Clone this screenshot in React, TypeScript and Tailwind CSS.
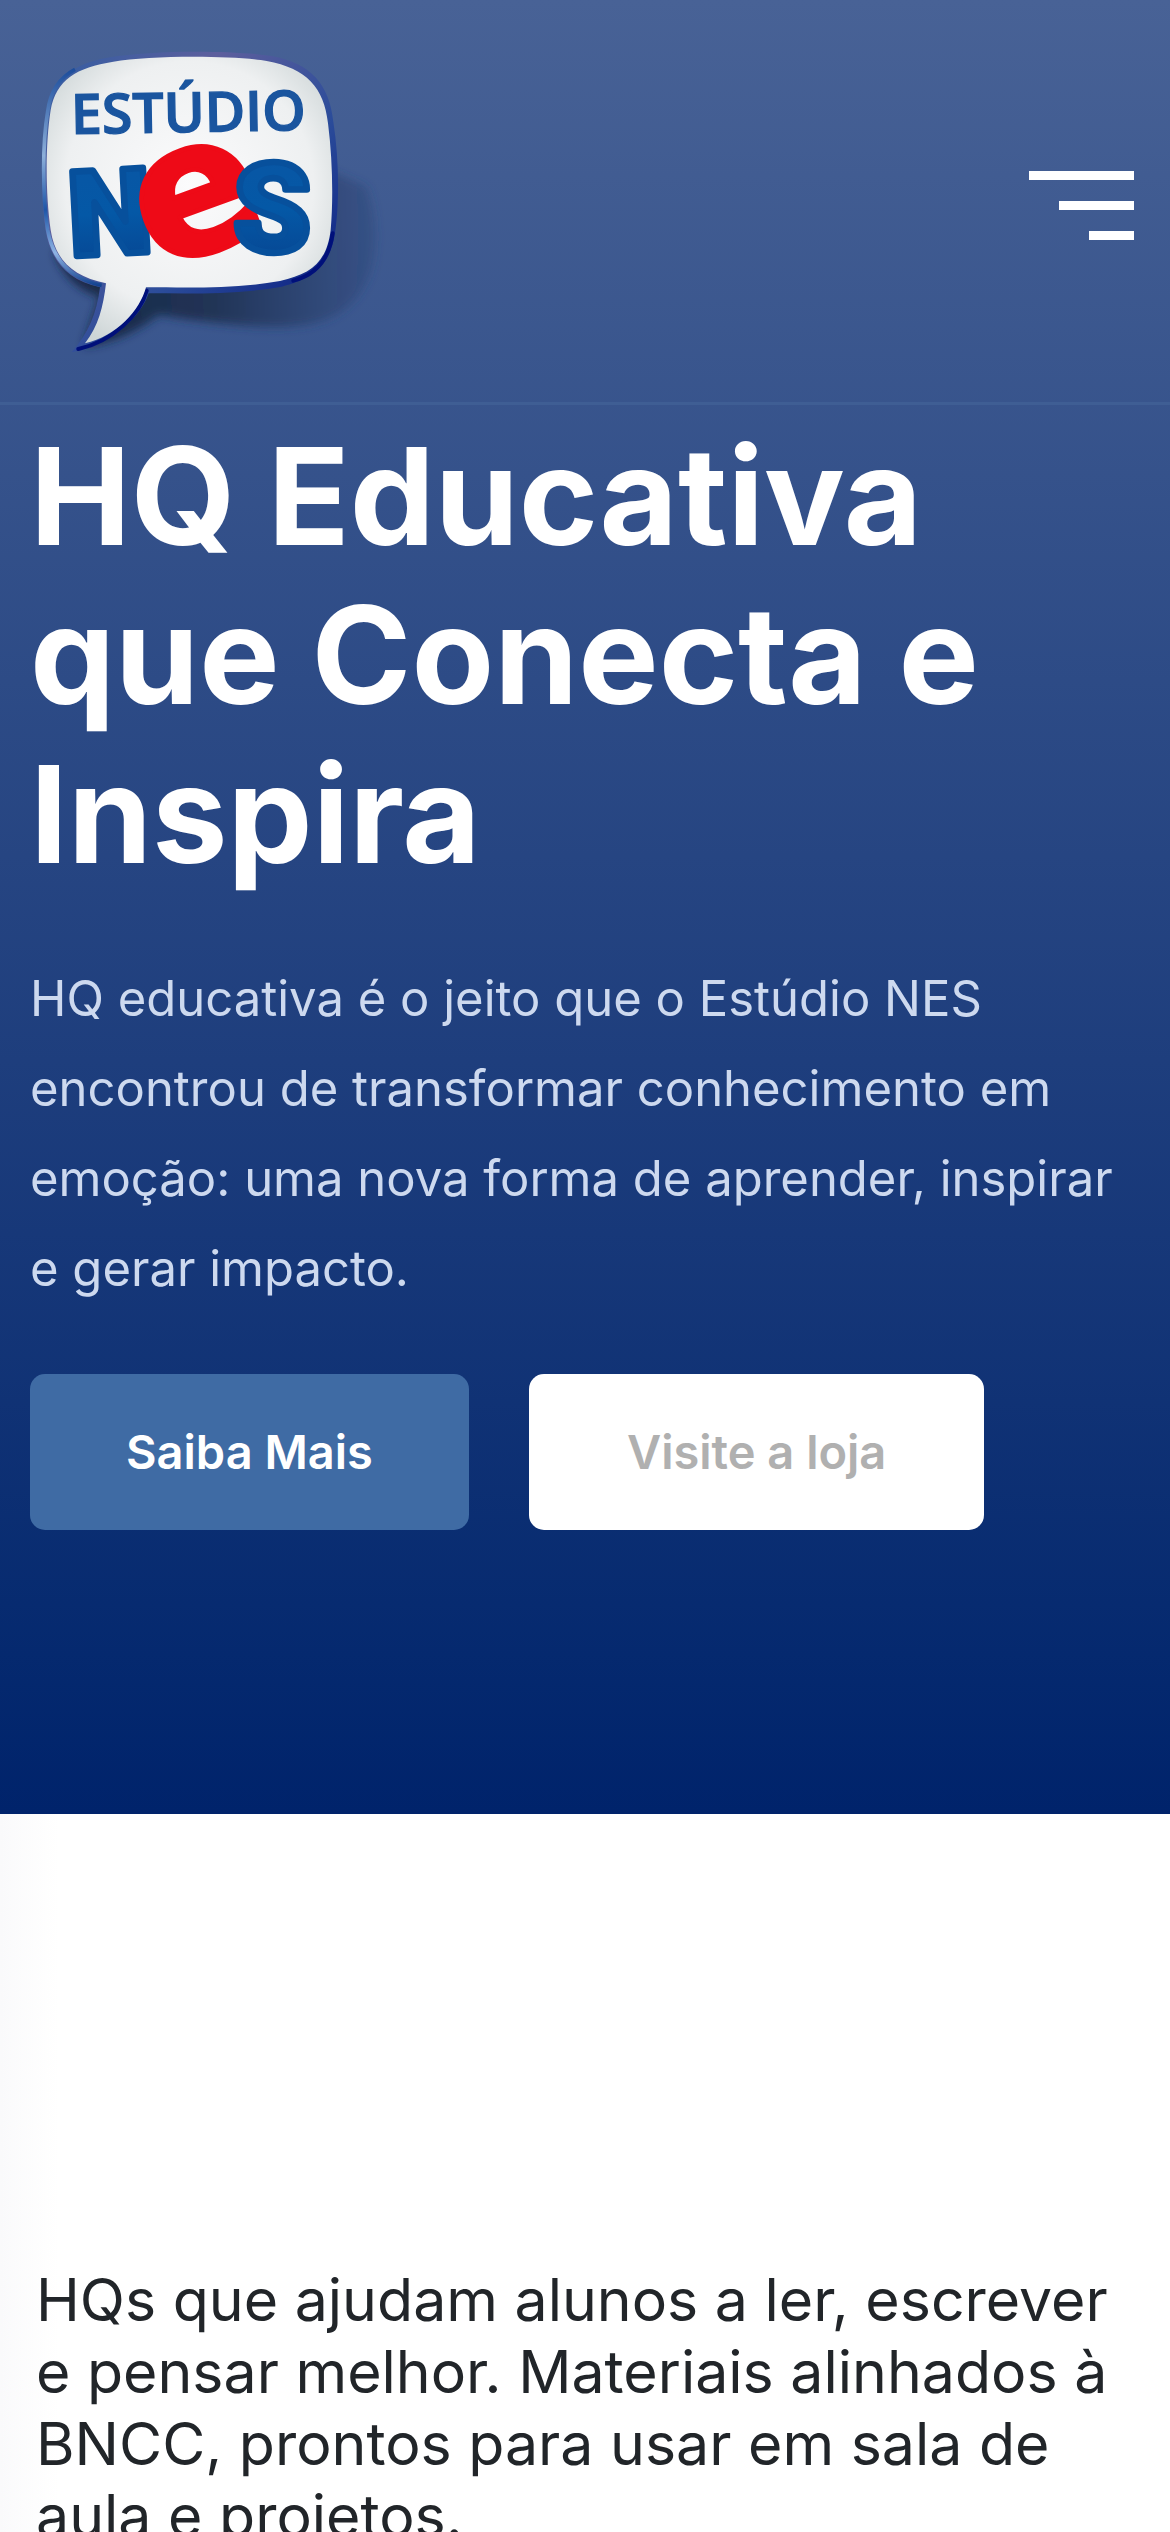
function Logo() {
  return (
    <svg
      viewBox="90 144 1080 945"
      className="h-[315px] w-[360px] overflow-visible"
      role="img"
      aria-label="Estúdio NES"
    >
      <defs>
        <linearGradient id="rim" x1="0" y1="0" x2="1" y2="1">
          <stop offset="0" stopColor="#2f5da3" />
          <stop offset="0.3" stopColor="#5d5f9d" />
          <stop offset="0.6" stopColor="#2b4c9a" />
          <stop offset="1" stopColor="#00107a" />
        </linearGradient>
        <linearGradient id="rimLeft" x1="0" y1="0" x2="0" y2="1">
          <stop offset="0" stopColor="#1c4d9c" />
          <stop offset="0.4" stopColor="#8db0da" />
          <stop offset="0.65" stopColor="#1f56a8" />
          <stop offset="0.85" stopColor="#8fb4e4" />
          <stop offset="1" stopColor="#12428f" />
        </linearGradient>
        <radialGradient id="face" cx="0.5" cy="0.45" r="0.62">
          <stop offset="0" stopColor="#fbfbfc" />
          <stop offset="0.7" stopColor="#eef0f1" />
          <stop offset="1" stopColor="#cdd5d6" />
        </radialGradient>
        <linearGradient id="blue" x1="0" y1="0" x2="0" y2="1">
          <stop offset="0" stopColor="#0a56a4" />
          <stop offset="0.5" stopColor="#0458a6" />
          <stop offset="1" stopColor="#07408c" />
        </linearGradient>
        <linearGradient id="drop" x1="0" y1="0" x2="1" y2="0">
          <stop offset="0" stopColor="#15233f" stopOpacity="0.95" />
          <stop offset="0.5" stopColor="#1d3050" stopOpacity="0.9" />
          <stop offset="1" stopColor="#2a4374" stopOpacity="0.4" />
        </linearGradient>
        <filter id="soft" x="-20%" y="-20%" width="140%" height="140%">
          <feGaussianBlur stdDeviation="14" />
        </filter>
      </defs>
      <path
        filter="url(#soft)"
        fill="url(#drop)"
        d="M165 760C190 830 240 875 300 890L250 1040C340 1030 420 990 475 945C600 965 760 985 860 980C1000 975 1070 920 1110 820C1135 740 1130 640 1100 560L960 500L300 600Z"
      />
      <path
        fill="url(#rim)"
        d="M330 172C450 150 700 150 815 168C935 190 988 255 1000 365C1018 480 1018 610 1005 700C990 800 930 838 845 860C710 885 570 880 446 880C420 955 330 1035 215 1057C265 1000 290 940 300 862C200 840 150 780 137 690C122 580 122 430 140 330C155 240 220 190 330 172Z"
      />
      <path
        fill="none"
        stroke="url(#rimLeft)"
        strokeWidth="11"
        d="M225 208C175 235 150 275 143 335C127 430 127 580 143 690C158 775 205 835 305 856"
      />
      <path
        fill="none"
        stroke="#00107a"
        strokeWidth="12"
        strokeLinecap="round"
        d="M440 872C420 945 335 1025 235 1047M998 700C986 790 935 828 880 842"
      />
      <path
        fill="url(#face)"
        d="M340 185C450 166 700 166 800 183C920 205 972 262 984 370C998 480 1000 600 992 690C980 790 930 822 840 843C700 868 560 862 438 862C420 930 350 1010 255 1030C295 980 310 920 318 850C220 830 165 780 152 690C136 580 136 430 152 330C168 240 230 202 340 185Z"
      />
      <text
        x="566"
        y="396"
        textAnchor="middle"
        transform="rotate(-1 566 396)"
        fill="#1a559f"
        stroke="#1a559f"
        strokeWidth="4"
        className="font-['Open_Sans'] text-[166px] font-semibold"
      >
        ESTÚDIO
      </text>
      <g strokeLinejoin="round">
        <text
          x="336"
          y="762"
          textAnchor="middle"
          transform="rotate(-3 336 762)"
          fill="url(#blue)"
          stroke="#07509c"
          strokeWidth="20"
          className="font-[Roboto] text-[356px] font-black"
        >
          N
        </text>
        <text
          x="592"
          y="757"
          textAnchor="middle"
          transform="rotate(-20 592 601)"
          fill="#ee0a17"
          stroke="#ee0a17"
          strokeWidth="14"
          className="font-['DejaVu_Sans'] text-[560px] font-bold"
        >
          e
        </text>
        <text
          x="816"
          y="756"
          textAnchor="middle"
          fill="url(#blue)"
          stroke="#07509c"
          strokeWidth="20"
          className="font-[Roboto] text-[374px] font-black"
        >
          S
        </text>
      </g>
    </svg>
  );
}

export default function App() {
  return (
    <div className="min-h-screen bg-white font-[Inter,sans-serif]">
      <div className="bg-linear-to-b from-[#486296] to-[#00236b]">
        <header className="flex items-center justify-between border-b-3 border-[#3f5e94] pt-12 pr-9 pb-[39px] pl-[30px]">
          <a href="#inicio">
            <Logo />
          </a>
          <button type="button" aria-label="Abrir menu" className="flex flex-col items-end gap-[21px]">
            <span className="h-[9px] w-[105px] bg-white" />
            <span className="h-[9px] w-[75px] bg-white" />
            <span className="h-[9px] w-[45px] bg-white" />
          </button>
        </header>
        <section id="inicio" className="px-[30px] pt-3 pb-[284px]">
          <h1 className="text-[135px] leading-[159px] font-bold text-white">
            HQ Educativa que Conecta e Inspira
          </h1>
          <p className="mt-[60px] text-[49px] leading-[90px] text-[#cdd9ef]">
            HQ educativa é o jeito que o Estúdio NES encontrou de transformar conhecimento em emoção:
            uma nova forma de aprender, inspirar e gerar impacto.
          </p>
          <div className="mt-[60px] flex flex-wrap gap-[60px] text-[47px] leading-[156px] font-semibold">
            <a href="#conteudo" className="rounded-[15px] bg-[#3f6ba4] px-24 text-white">
              Saiba Mais
            </a>
            <a href="#loja" className="rounded-[15px] bg-white px-[98px] text-[#b0b0b0]">
              Visite a loja
            </a>
          </div>
        </section>
      </div>
      <main id="conteudo" className="bg-linear-to-r from-[#fafafb] to-white to-5% px-9 pt-[450px]">
        <h2 className="text-[59px] leading-[72px] text-[#212529]">
          HQs que ajudam alunos a ler, escrever e pensar melhor. Materiais alinhados à BNCC, prontos
          para usar em sala de aula e projetos.
        </h2>
      </main>
    </div>
  );
}
